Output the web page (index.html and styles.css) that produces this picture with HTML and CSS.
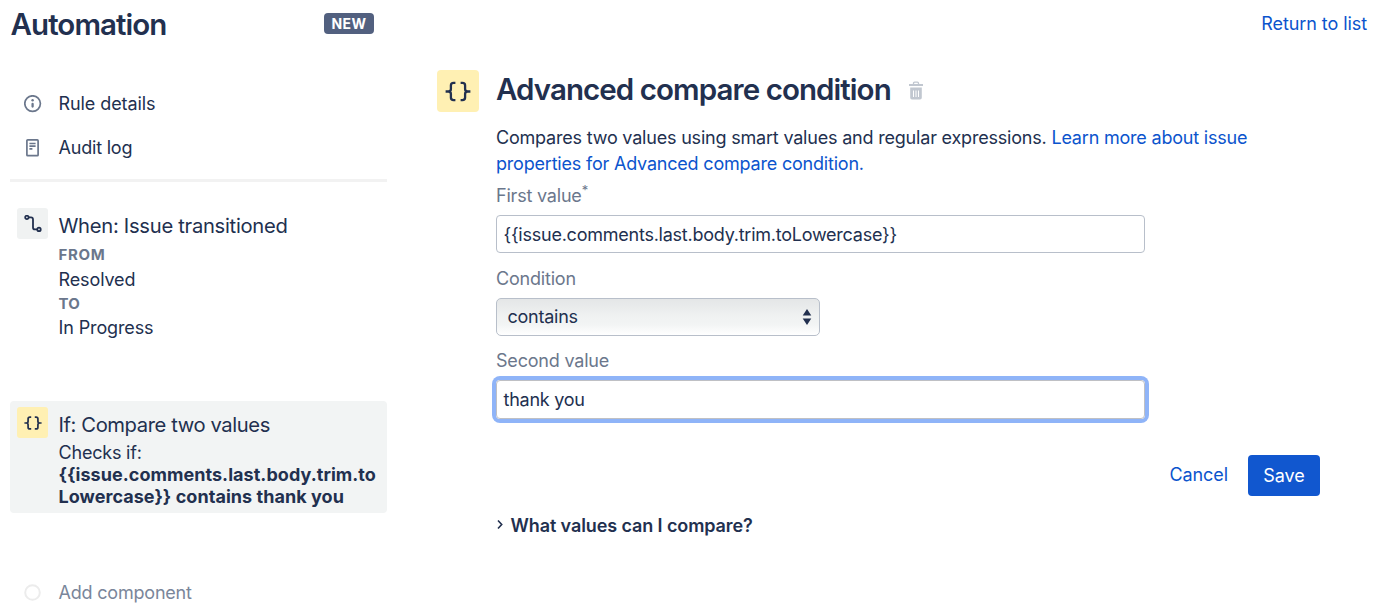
FILE: index.html
```
<!DOCTYPE html>
<html lang="en">
<head>
<meta charset="utf-8">
<title>Automation</title>
<link rel="stylesheet" href="styles.css">
</head>
<body>
<div class="app">
  <aside class="sidebar">
    <header class="side-header">
      <h1 class="heading">Automation</h1>
      <span class="badge">NEW</span>
    </header>

    <nav class="side-nav">
      <a class="nav-item">
        <span class="nav-icon">
          <svg width="18" height="18" viewBox="0 0 18 18" fill="none" stroke="#6b778c" stroke-width="1.7">
            <circle cx="8.6" cy="8.6" r="7.8"/>
            <circle cx="8.6" cy="5.3" r="1.2" fill="#6b778c" stroke="none"/>
            <path d="M8.6 8.9v2.6" stroke-width="2.3" stroke-linecap="round"/>
          </svg>
        </span>
        <span class="tight-s">Rule details</span>
      </a>
      <a class="nav-item">
        <span class="nav-icon">
          <svg width="18" height="18" viewBox="0 0 18 18" fill="none" stroke="#6b778c" stroke-width="1.7">
            <rect x="2.9" y="0.9" width="11.2" height="15.8" rx="0.8"/>
            <path d="M5.4 4.5h6.2M5.4 7.2h6.2M5.4 9.9h3"/>
          </svg>
        </span>
        <span>Audit log</span>
      </a>
    </nav>

    <section class="rule">
      <span class="tile tile-grey">
        <svg width="18" height="18" viewBox="0 0 18 18" fill="none" stroke="#22304f" stroke-width="1.8">
          <circle cx="2.9" cy="2.4" r="1.7"/>
          <path d="M4.6 2.4h2.4a2 2 0 0 1 2 2v8a2 2 0 0 0 2 2h2.2"/>
          <circle cx="15" cy="14.4" r="1.7"/>
        </svg>
      </span>
      <div class="rule-body">
        <h2 class="rule-title">When: Issue transitioned</h2>
        <dl class="facts">
          <dt class="from">FROM</dt>
          <dd>Resolved</dd>
          <dt>TO</dt>
          <dd>In Progress</dd>
        </dl>
      </div>
    </section>

    <section class="rule rule-selected">
      <span class="tile tile-yellow">
        <svg width="18" height="14" viewBox="0 0 26 20" fill="none" stroke="#22304f" stroke-width="2.5">
          <path d="M10.4 1.4H8.6Q5.9 1.4 5.9 4v3.4Q5.9 10 3.2 10H0.6M3.2 10Q5.9 10 5.9 12.6v3.4Q5.9 18.6 8.6 18.6H10.4M15.6 1.4h1.8Q20.1 1.4 20.1 4v3.4Q20.1 10 22.8 10H25.4M22.8 10Q20.1 10 20.1 12.6v3.4Q20.1 18.6 17.4 18.6H15.6"/>
        </svg>
      </span>
      <div class="rule-body">
        <h2 class="rule-title rule-title-if">If: Compare two values</h2>
        <p class="check">Checks if:<br><b>{{issue.comments.last.body.trim.to<br>Lowercase}} contains thank you</b></p>
      </div>
      <svg class="close" width="14" height="14" viewBox="0 0 14 14" fill="none" stroke="#7a869a" stroke-width="1.6">
        <path d="M1.4 1.4l11 11M12.4 1.4l-11 11"/>
      </svg>
    </section>

    <div class="add">
      <span class="nav-icon">
        <svg width="18" height="18" viewBox="0 0 18 18" fill="none" stroke="#ececec" stroke-width="2">
          <circle cx="8.5" cy="8.5" r="7.3"/>
        </svg>
      </span>
      <span>Add component</span>
    </div>
  </aside>

  <main class="main">
    <div class="top"><a class="link tight-s">Return to list</a></div>

    <div class="detail">
      <span class="tile tile-yellow tile-large">
        <svg width="26" height="21" viewBox="0 0 26 20" fill="none" stroke="#22304f" stroke-width="2.3">
          <path d="M10.4 1.4H8.6Q5.9 1.4 5.9 4v3.4Q5.9 10 3.2 10H0.6M3.2 10Q5.9 10 5.9 12.6v3.4Q5.9 18.6 8.6 18.6H10.4M15.6 1.4h1.8Q20.1 1.4 20.1 4v3.4Q20.1 10 22.8 10H25.4M22.8 10Q20.1 10 20.1 12.6v3.4Q20.1 18.6 17.4 18.6H15.6"/>
        </svg>
      </span>

      <div class="content">
        <div class="title-row">
          <h1 class="heading">Advanced compare condition</h1>
          <svg class="trash" width="14" height="19" viewBox="0 0 14 19" fill="none" stroke="#c1c7d0">
            <path d="M4.5 3.2V2.3Q4.5 1.2 5.6 1.2h2.8Q9.5 1.2 9.5 2.3v0.9" stroke-width="1.3"/>
            <path d="M0 4h14" stroke-width="2"/>
            <path d="M1.2 6.5h11.6v10.2a1.8 1.8 0 0 1-1.8 1.8H3a1.8 1.8 0 0 1-1.8-1.8z" fill="#c1c7d0" stroke="none"/>
            <path d="M4.5 9.5v6.5M7 9.5v6.5M9.5 9.5v6.5" stroke="#fff" stroke-width="1"/>
          </svg>
        </div>
        <p class="description">Compares two values using smart values and regular expressions. <a class="link">Learn more about issue<br>properties for Advanced compare condition.</a></p>

        <form class="form">
          <label class="label">First value<sup class="required">*</sup></label>
          <div class="field first">{{issue.comments.last.body.trim.toLowercase}}</div>
          <label class="label">Condition</label>
          <div class="field select">
            <span>contains</span>
            <svg width="10" height="16" viewBox="0 0 10 16" fill="#22304f"><path d="M5 0l4.3 6.6H0.7zM5 16L0.7 9.4h8.6z"/></svg>
          </div>
          <label class="label">Second value</label>
          <div class="field focused">thank you</div>
        </form>

        <div class="actions">
          <a class="link tight-s">Cancel</a>
          <span class="save">Save</span>
        </div>

        <div class="help">
          <svg class="chevron" width="6" height="11" viewBox="0 0 6 11" fill="none" stroke="#22304f" stroke-width="1.6"><path d="M1 1.5l3.7 4L1 9.5"/></svg>
          <span>What values can I compare?</span>
        </div>
      </div>
    </div>
  </main>
</div>
</body>
</html>
```
FILE: styles.css
```
* {
  box-sizing: border-box;
}

body {
  margin: 0;
  background: #fff;
  color: #22304f;
  font: 18px/26px Inter, "Open Sans", sans-serif;
  letter-spacing: -0.2px;
}

h1, h2, p, dl, dd {
  margin: 0;
}

.app {
  display: flex;
  height: 612px;
  overflow: hidden;
}

.sidebar {
  width: 387px;
  padding-left: 10px;
}

.heading {
  font-size: 29.5px;
  font-weight: 600;
  line-height: 40px;
  letter-spacing: -0.93px;
  white-space: nowrap;
}

.side-header {
  display: flex;
  align-items: center;
  justify-content: space-between;
  padding: 4px 13px 0 0.5px;
}

.badge {
  width: 50px;
  margin-bottom: 2px;
  border-radius: 4px;
  background: #52607f;
  color: #fff;
  font-size: 14px;
  font-weight: 700;
  line-height: 21px;
  letter-spacing: 0.4px;
  text-align: center;
}

.side-nav {
  display: flex;
  flex-direction: column;
  gap: 18px;
  padding: 47px 0 18px;
  border-bottom: 3px solid #f2f2f2;
}

.nav-item, .add {
  display: flex;
  align-items: center;
  padding-left: 14px;
}

.nav-icon {
  display: flex;
  width: 34.5px;
}

.nav-item .nav-icon {
  padding-bottom: 1px;
}

.tight-s {
  letter-spacing: -0.08px;
}

.rule {
  display: flex;
  gap: 10.5px;
  padding: 26px 0 0 7px;
}

.tile {
  display: flex;
  flex: none;
  align-items: center;
  justify-content: center;
  width: 31px;
  height: 31px;
  border-radius: 3px;
}

.tile-grey {
  background: #f0f2f2;
}

.tile-yellow {
  background: #fff0b3;
}

.tile-large {
  width: 42px;
  height: 42px;
  border-radius: 4px;
}

.rule-title {
  padding-top: 5px;
  font-size: 20.2px;
  font-weight: 400;
  line-height: 26px;
  letter-spacing: -0.28px;
}

.rule-title-if {
  letter-spacing: -0.4px;
}

.facts {
  padding-top: 4px;
}

.facts dt {
  color: #6b778c;
  font-size: 15px;
  font-weight: 700;
  line-height: 22px;
  letter-spacing: 0.3px;
}

.facts .from {
  line-height: 24px;
  letter-spacing: 0.7px;
}

.facts dd {
  line-height: 26px;
  letter-spacing: -0.12px;
}

.rule-selected {
  height: 112px;
  margin-top: 60px;
  padding-top: 6px;
  border-radius: 4px;
  background: #f2f4f4;
}

.close {
  margin: 9px 0 0 77px;
}

.check {
  padding-top: 4px;
  line-height: 22px;
}

.check b {
  letter-spacing: 0.05px;
  white-space: nowrap;
}

.add {
  margin-top: 67px;
  color: #7a869a;
}

.main {
  flex: 1;
  padding: 0 7px 0 50px;
}

.top {
  display: flex;
  justify-content: flex-end;
  padding-top: 11px;
}

.link {
  color: #0b54cd;
}

.detail {
  display: flex;
  gap: 17px;
  padding-top: 33px;
}

.content {
  width: 824px;
}

.title-row {
  display: flex;
  align-items: center;
  gap: 18px;
  height: 38px;
}

.trash {
  margin-top: 3px;
}

.description {
  padding-top: 17px;
  white-space: nowrap;
}

.label {
  display: block;
  height: 26px;
  color: #6b778c;
}

.form {
  display: flex;
  flex-direction: column;
  padding-top: 6px;
}

.required {
  font-size: 13px;
  line-height: 0;
}

.field {
  display: flex;
  align-items: center;
  width: 649px;
  height: 38px;
  margin: 6px 0 12.5px;
  padding: 0 7px 0 6.5px;
  border: 1px solid #b8bfca;
  border-radius: 4px;
  letter-spacing: -0.24px;
}

.first {
  padding-top: 1px;
}

.select {
  justify-content: space-between;
  width: 324px;
  padding: 0 7px 0 10.5px;
  border-radius: 5px;
  background: linear-gradient(#e4e6e7, #f0f2f2 50%, #f2f4f4 70%, #fff);
}

.focused {
  height: 39px;
  border-color: #bfc0c4;
  box-shadow: 0 0 0 4px #8fb4f8;
}

.actions {
  display: flex;
  align-items: center;
  justify-content: flex-end;
  gap: 20px;
  padding-top: 23.4px;
}

.save {
  width: 72px;
  border-radius: 4px;
  background: #1157cf;
  color: #fff;
  line-height: 41px;
  letter-spacing: 0;
  text-align: center;
}

.help {
  display: flex;
  align-items: center;
  gap: 7.5px;
  padding: 17.6px 0 0 1px;
  font-weight: 600;
  letter-spacing: -0.1px;
}

.chevron {
  margin-bottom: 4px;
}
```
